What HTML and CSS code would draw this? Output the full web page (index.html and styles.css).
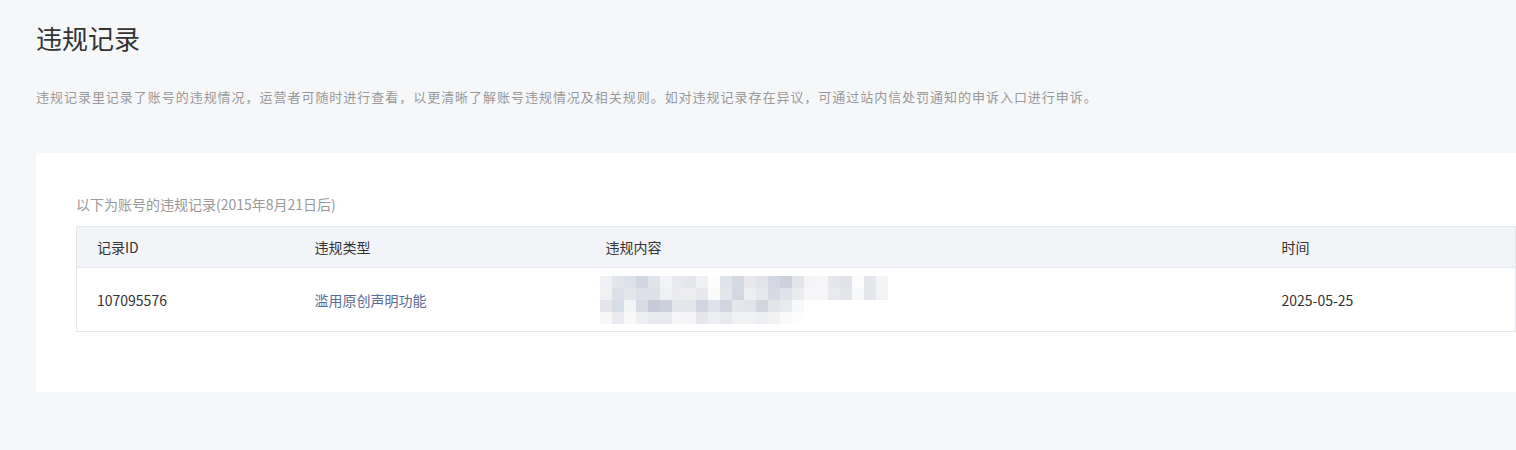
FILE: index.html
```html
<!DOCTYPE html>
<html lang="zh-CN">
<head>
<meta charset="utf-8">
<title>违规记录</title>
<link rel="stylesheet" href="styles.css">
</head>
<body>
<div class="page">
  <h1 class="title">违规记录</h1>
  <p class="desc">违规记录里记录了账号的违规情况，运营者可随时进行查看，以更清晰了解账号违规情况及相关规则。如对违规记录存在异议，可通过站内信处罚通知的申诉入口进行申诉。</p>
  <div class="card">
    <p class="sub">以下为账号的违规记录(2015年8月21日后)</p>
    <table class="tbl">
      <colgroup>
        <col class="c1"><col class="c2"><col class="c3"><col class="c4">
      </colgroup>
      <thead>
        <tr><th>记录ID</th><th>违规类型</th><th>违规内容</th><th>时间</th></tr>
      </thead>
      <tbody>
        <tr>
          <td>107095576</td>
          <td><a class="link" href="#">滥用原创声明功能</a></td>
          <td>
            <div class="mosaic">
              <i style="background:#eef0f3"></i><i style="background:#e3e5ec"></i><i style="background:#dde1ea"></i><i style="background:#d2d6e2"></i><i style="background:#e0e3ea"></i><i style="background:#f1f3f6"></i><i style="background:#e7e9ee"></i><i style="background:#e6e7ec"></i><i style="background:#eef0f3"></i><i style="background:#fdfdfd"></i><i style="background:#e0e3ea"></i><i style="background:#d4d8e2"></i><i style="background:#e8e8ec"></i><i style="background:#e1e4ea"></i><i style="background:#d4d7e1"></i><i style="background:#cdd1de"></i><i style="background:#e3e5ea"></i><i style="background:#f5f5f7"></i><i style="background:#f6f5f7"></i><i style="background:#e5e7ec"></i><i style="background:#e0e3ea"></i><i style="background:#fbfbfc"></i><i style="background:#e6e7ec"></i><i style="background:#f3f4f6"></i>
              <i style="background:#f0f1f3"></i><i style="background:#dde0e8"></i><i style="background:#e3e6eb"></i><i style="background:#dde0e8"></i><i style="background:#dde0e6"></i><i style="background:#eff0f3"></i><i style="background:#ebecf0"></i><i style="background:#ededf0"></i><i style="background:#e6e8ee"></i><i style="background:#fafafb"></i><i style="background:#e2e5ea"></i><i style="background:#d3d7e1"></i><i style="background:#eceef1"></i><i style="background:#e6e8ed"></i><i style="background:#d7dae3"></i><i style="background:#dfe2ea"></i><i style="background:#ebecf0"></i><i style="background:#f6f6f8"></i><i style="background:#f6f6f8"></i><i style="background:#e8e9ed"></i><i style="background:#e3e5ea"></i><i style="background:#f8f9fa"></i><i style="background:#e6e7ec"></i><i style="background:#f2f3f5"></i>
              <i style="background:#e3e5ea"></i><i style="background:#d7dde6"></i><i style="background:#f3f4f6"></i><i style="background:#d8dbe3"></i><i style="background:#c7cad8"></i><i style="background:#ccd0dc"></i><i style="background:#e4e6eb"></i><i style="background:#e5e6eb"></i><i style="background:#d2d5df"></i><i style="background:#dfe2e8"></i><i style="background:#d0d5e0"></i><i style="background:#e5e7ec"></i><i style="background:#e3e4e9"></i><i style="background:#d3d5df"></i><i style="background:#e3e5eb"></i><i style="background:#e8eaee"></i><i style="background:#f8f9fa"></i><i></i><i></i><i></i><i></i><i></i><i></i><i></i>
              <i style="background:#f7f7f8"></i><i style="background:#e8eaef"></i><i style="background:#f9f9fa"></i><i style="background:#eeeff2"></i><i style="background:#e8e9ee"></i><i style="background:#e8e9ee"></i><i style="background:#f6f6f8"></i><i style="background:#f5f5f7"></i><i style="background:#e5e7ec"></i><i style="background:#eceef1"></i><i style="background:#e8e9ed"></i><i style="background:#f0f1f3"></i><i style="background:#f0f1f3"></i><i style="background:#eceef1"></i><i style="background:#f1f2f4"></i><i style="background:#fafafa"></i><i style="background:#fdfdfd"></i><i></i><i></i><i></i><i></i><i></i><i></i><i></i>
            </div>
          </td>
          <td>2025-05-25</td>
        </tr>
      </tbody>
    </table>
  </div>
</div>
</body>
</html>
```

FILE: styles.css
```css
html, body {
  margin: 0;
  padding: 0;
  background: #f6f7f9;
  overflow: hidden;
}
body {
  font-family: "Noto Sans CJK SC", "Noto Sans", sans-serif;
  color: #333;
}
.page {
  padding: 20px 0 0 36px;
  width: 1519px;
}
.title {
  margin: 0;
  font-size: 26px;
  line-height: 36px;
  font-weight: 400;
  color: #333;
}
.desc {
  margin: 31px 0 0;
  font-size: 13px;
  line-height: 20px;
  letter-spacing: 0.97px;
  color: #999;
}
.card {
  margin-top: 46px;
  background: #fff;
  border-radius: 3px;
  padding: 41px 40px 60px;
}
.sub {
  margin: 0 0 12px;
  font-size: 14px;
  line-height: 20px;
  color: #999;
}
.tbl {
  width: 1439px;
  border-collapse: collapse;
  table-layout: fixed;
  font-size: 14px;
  color: #333;
}
.c1 { width: 217px; }
.c2 { width: 291px; }
.c3 { width: 676px; }
.c4 { width: 255px; }
.tbl th {
  background: #f3f4f8;
  font-weight: 400;
  text-align: left;
  height: 40px;
  padding: 0 0 0 21px;
  border-top: 1px solid #e4e7ec;
  border-bottom: 1px solid #e4e7ec;
  line-height: 20px;
}
.tbl th:first-child, .tbl td:first-child {
  border-left: 1px solid #e4e7ec;
  padding-left: 20px;
}
.tbl th:last-child, .tbl td:last-child { border-right: 1px solid #e4e7ec; }
.tbl td {
  height: 63px;
  padding: 0 0 0 21px;
  border-bottom: 1px solid #e4e7ec;
  line-height: 20px;
  vertical-align: middle;
}
.link {
  color: #576b95;
  text-decoration: none;
}
.mosaic {
  display: grid;
  grid-template-columns: repeat(24, 12px);
  grid-auto-rows: 12px;
  width: 288px;
  margin-left: -6px;
  box-shadow: 0 0 8px 7px rgba(255, 255, 255, 0.9);
}
.mosaic i {
  display: block;
}
```
